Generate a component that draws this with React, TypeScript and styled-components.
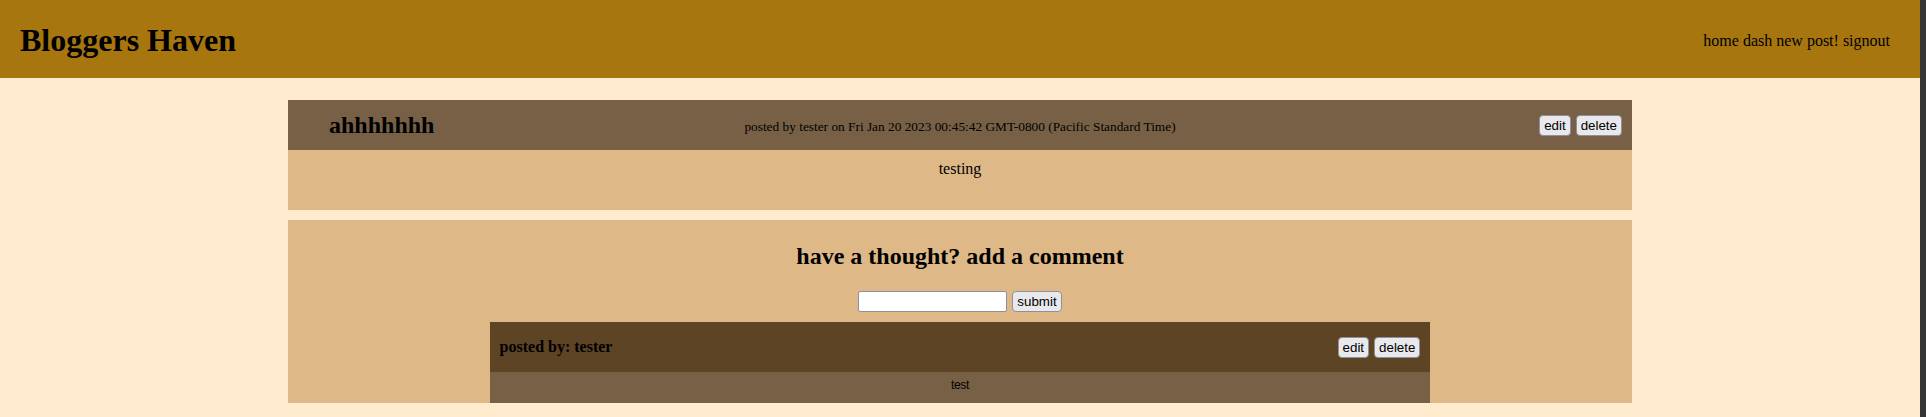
import React from "react";
import styled, { createGlobalStyle } from "styled-components";

const GlobalStyle = createGlobalStyle`
  html, body {
    margin: 0;
    padding: 0;
    background: #ffebcd;
  }
  body {
    font-family: "Liberation Serif", "Times New Roman", serif;
    font-size: 16px;
    color: #000;
  }
`;

const Shell = styled.div`
  display: flex;
  min-height: 100vh;
  background: #ffebcd;
`;

const Main = styled.div`
  flex: 1;
  display: flex;
  flex-direction: column;
  min-width: 0;
`;

const ScrollStrip = styled.div`
  width: 6px;
  flex: none;
  background: #353535;
`;

const TopBar = styled.header`
  height: 78px;
  background: #a8760f;
  display: flex;
  align-items: center;
  justify-content: space-between;
  padding: 0 30px 0 20px;
`;

const Brand = styled.h1`
  margin: 0;
  font-size: 32px;
  font-weight: bold;
  line-height: 37px;
  padding-top: 2px;
`;

const Nav = styled.nav`
  display: flex;
  gap: 4px;
  font-size: 16px;
  line-height: 18px;
  padding-top: 4px;
`;

const NavLink = styled.a`
  color: #000;
  text-decoration: none;
  cursor: pointer;
`;

const Content = styled.main`
  display: flex;
  flex-direction: column;
  align-items: center;
  padding-top: 22px;
  gap: 10px;
`;

const PostCard = styled.article`
  width: 70%;
  background: #deb887;
`;

const PostHead = styled.div`
  height: 50px;
  background: #776046;
  display: grid;
  grid-template-columns: 1fr auto 1fr;
  align-items: center;
  padding: 0 10px;
`;

const PostTitle = styled.h2`
  margin: 0;
  padding-left: 31px;
  font-size: 24px;
  font-weight: bold;
  line-height: 28px;
`;

const PostMeta = styled.p`
  margin: 0;
  font-size: 13.33px;
  line-height: 16px;
  padding-top: 3px;
`;

const Actions = styled.div`
  display: flex;
  justify-content: flex-end;
  align-items: center;
  gap: 5px;
`;

const Button = styled.button`
  font-family: "Liberation Sans", Arial, sans-serif;
  font-size: 13.33px;
  line-height: 15px;
  height: 21px;
  padding: 2px 4px;
  color: #000;
  background: #e9e9ed;
  border: 1px solid #8f8f9d;
  border-radius: 4px;
  cursor: pointer;
  box-sizing: border-box;
`;

const PostBody = styled.div`
  height: 60px;
  box-sizing: border-box;
  padding-top: 10px;
  text-align: center;
  line-height: 18px;
`;

const CommentSection = styled.section`
  width: 70%;
  background: #deb887;
  display: flex;
  flex-direction: column;
  align-items: center;
  padding-top: 22px;
  height: 183px;
  box-sizing: border-box;
  overflow: hidden;
`;

const SectionTitle = styled.h2`
  margin: 0;
  font-size: 24px;
  font-weight: bold;
  line-height: 28px;
`;

const CommentForm = styled.form`
  display: flex;
  gap: 5px;
  margin-top: 21px;
`;

const TextInput = styled.input`
  width: 149px;
  height: 21px;
  box-sizing: border-box;
  border: 1px solid #8f8f9d;
  border-radius: 2px;
  background: #fff;
  padding: 1px 3px;
  font-family: "Liberation Sans", Arial, sans-serif;
  font-size: 13.33px;
`;

const CommentCard = styled.div`
  width: 70%;
  margin-top: 10px;
`;

const CommentHead = styled.div`
  height: 50px;
  background: #5d4424;
  display: flex;
  align-items: center;
  justify-content: space-between;
  padding: 0 10px;
`;

const CommentAuthor = styled.h4`
  margin: 0;
  font-size: 16px;
  font-weight: bold;
  line-height: 18px;
`;

const CommentBody = styled.div`
  height: 31px;
  box-sizing: border-box;
  padding-top: 6px;
  background: #776046;
  text-align: center;
  line-height: 15px;
  font-family: "Liberation Sans", Arial, sans-serif;
  font-size: 12px;
  letter-spacing: -0.3px;
`;

export default function App() {
  return (
    <>
      <GlobalStyle />
      <Shell>
        <Main>
          <TopBar>
            <Brand>Bloggers Haven</Brand>
            <Nav>
              <NavLink>home</NavLink>
              <NavLink>dash</NavLink>
              <NavLink>new post!</NavLink>
              <NavLink>signout</NavLink>
            </Nav>
          </TopBar>
          <Content>
            <PostCard>
              <PostHead>
                <PostTitle>ahhhhhhh</PostTitle>
                <PostMeta>
                  posted by tester on Fri Jan 20 2023 00:45:42 GMT-0800 (Pacific Standard Time)
                </PostMeta>
                <Actions>
                  <Button type="button">edit</Button>
                  <Button type="button">delete</Button>
                </Actions>
              </PostHead>
              <PostBody>testing</PostBody>
            </PostCard>
            <CommentSection>
              <SectionTitle>have a thought? add a comment</SectionTitle>
              <CommentForm onSubmit={(e) => e.preventDefault()}>
                <TextInput type="text" />
                <Button type="submit">submit</Button>
              </CommentForm>
              <CommentCard>
                <CommentHead>
                  <CommentAuthor>posted by: tester</CommentAuthor>
                  <Actions>
                    <Button type="button">edit</Button>
                    <Button type="button">delete</Button>
                  </Actions>
                </CommentHead>
                <CommentBody>test</CommentBody>
              </CommentCard>
            </CommentSection>
          </Content>
        </Main>
        <ScrollStrip />
      </Shell>
    </>
  );
}
